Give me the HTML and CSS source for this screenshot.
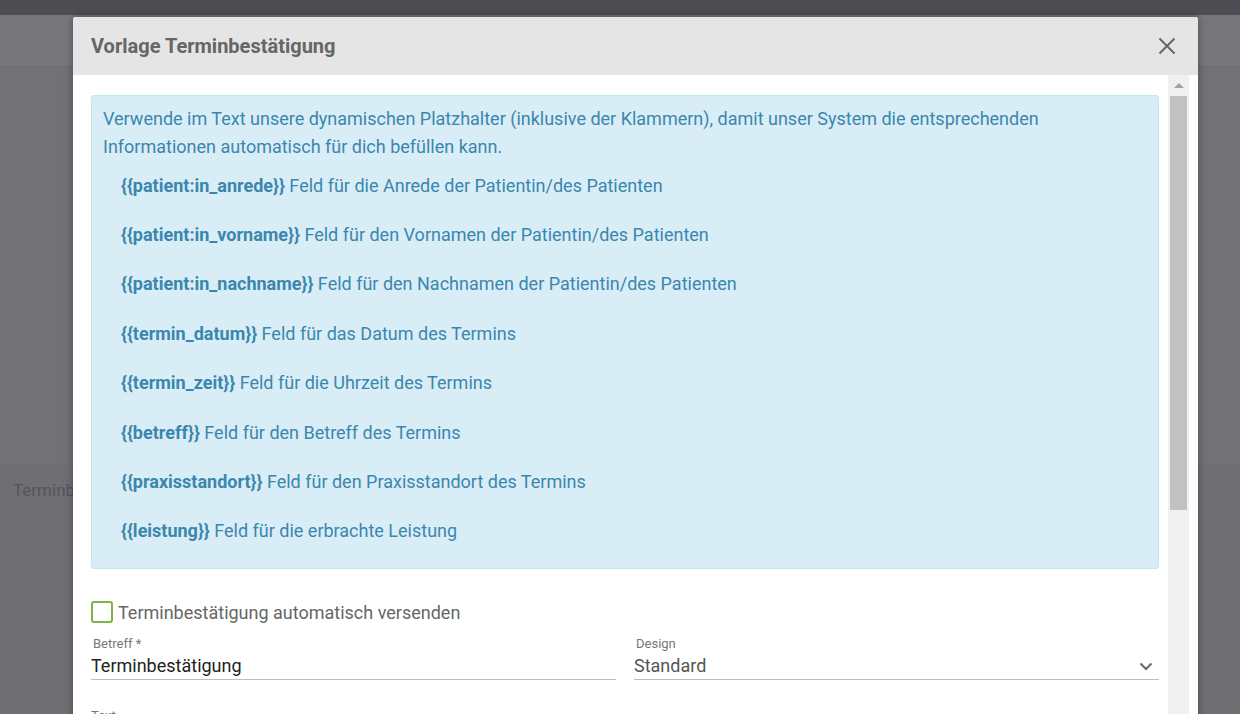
FILE: index.html
```html
<!DOCTYPE html>
<html lang="de">
<head>
<meta charset="utf-8">
<title>Vorlage Terminbestätigung</title>
<link rel="stylesheet" href="styles.css">
</head>
<body>
<div class="page">
  <div class="topbar"></div>
  <div class="subbar"></div>
  <div class="upper"></div>
  <div class="lower">
    <div class="row-title">Terminbestätigung</div>
  </div>
</div>

<div class="modal">
  <div class="modal-header">
    <h1 class="modal-title">Vorlage Terminbestätigung</h1>
    <button class="close" aria-label="Schließen">
      <svg width="18" height="18" viewBox="0 0 18 18"><path d="M1.5 1.5 L16.5 16.5 M16.5 1.5 L1.5 16.5" stroke="#666" stroke-width="2" fill="none"/></svg>
    </button>
  </div>
  <div class="modal-body">
    <div class="scroll-content">
      <div class="info">
        <p class="info-text">Verwende im Text unsere dynamischen Platzhalter (inklusive der Klammern), damit unser System die entsprechenden Informationen automatisch für dich befüllen kann.</p>
        <ul class="placeholders">
          <li><b>{{patient:in_anrede}}</b> Feld für die Anrede der Patientin/des Patienten</li>
          <li><b>{{patient:in_vorname}}</b> Feld für den Vornamen der Patientin/des Patienten</li>
          <li><b>{{patient:in_nachname}}</b> Feld für den Nachnamen der Patientin/des Patienten</li>
          <li><b>{{termin_datum}}</b> Feld für das Datum des Termins</li>
          <li><b>{{termin_zeit}}</b> Feld für die Uhrzeit des Termins</li>
          <li><b>{{betreff}}</b> Feld für den Betreff des Termins</li>
          <li><b>{{praxisstandort}}</b> Feld für den Praxisstandort des Termins</li>
          <li><b>{{leistung}}</b> Feld für die erbrachte Leistung</li>
        </ul>
      </div>
      <label class="check">
        <span class="box"></span>
        <span class="check-label">Terminbestätigung automatisch versenden</span>
      </label>
      <div class="fields">
        <div class="field">
          <div class="field-label">Betreff *</div>
          <div class="field-value">Terminbestätigung</div>
        </div>
        <div class="field">
          <div class="field-label">Design</div>
          <div class="field-value select">Standard
            <svg class="chev" width="14" height="9" viewBox="0 0 14 9"><path d="M1.5 1.5 L7 7 L12.5 1.5" stroke="#666" stroke-width="2" fill="none"/></svg>
          </div>
        </div>
      </div>
      <div class="text-label">Text</div>
    </div>
    <div class="scrollbar">
      <div class="arrow"></div>
      <div class="thumb"></div>
    </div>
  </div>
</div>
</body>
</html>
```

FILE: styles.css
```css
* { box-sizing: border-box; }
html, body { margin: 0; padding: 0; height: 100%; overflow: hidden; }
body {
  font-family: Roboto, "Liberation Sans", sans-serif;
  background: #6f6e73;
}
.page { height: 714px; }
.topbar { height: 15px; background: #4e4d53; }
.subbar { height: 52px; background: #77767b; border-bottom: 1px solid #6c6b70; }
.upper { height: 398px; background: #727176; }
.lower { background: #6f6e73; padding-top: 1px; }
.row-title {
  padding-left: 13px;
  width: 73px;
  overflow: hidden;
  white-space: nowrap;
  font-size: 17px;
  line-height: 48px;
  color: #56555b;
}

.modal {
  position: absolute;
  left: 73px;
  top: 17px;
  width: 1125px;
  height: 720px;
  background: #fff;
  border-radius: 3px 3px 0 0;
  box-shadow: 0 0 8px rgba(0,0,0,0.35);
  display: flex;
  flex-direction: column;
  overflow: hidden;
}
.modal-header {
  height: 58px;
  background: #e5e5e5;
  display: flex;
  align-items: center;
  justify-content: space-between;
  padding: 0 22px 0 18px;
}
.modal-title {
  margin: 0;
  font-size: 20px;
  font-weight: 700;
  color: #666;
}
.close {
  background: none;
  border: 0;
  padding: 0;
  width: 18px;
  height: 18px;
  display: flex;
}
.modal-body {
  flex: 1;
  display: flex;
  padding-right: 9px;
}
.scroll-content {
  flex: 1;
  padding: 20px 9px 0 18px;
}
.info {
  background: #d9edf7;
  border: 1px solid #bce8f1;
  border-radius: 3px;
  color: #3a87ad;
  padding: 9px 12px 12px 11px;
  font-size: 18px;
  line-height: 28px;
}
.info-text { margin: 0; }
.placeholders {
  list-style: none;
  margin: 0;
  padding: 0 0 0 18px;
}
.placeholders li { padding: 10.7px 0; }
.placeholders b { font-weight: 700; }

.check {
  display: flex;
  align-items: center;
  gap: 5px;
  margin-top: 32px;
  height: 22px;
}
.box {
  width: 22px;
  height: 22px;
  border: 2px solid #7cb342;
  border-radius: 3px;
}
.check-label {
  font-size: 18px;
  color: #666;
}
.fields {
  display: grid;
  grid-template-columns: 1fr 1fr;
  gap: 18px;
  margin-top: 12px;
}
.field { border-bottom: 1px solid #bdbdbd; }
.field-label {
  font-size: 13px;
  color: #777;
  padding-left: 2px;
  line-height: 18px;
}
.field-value {
  font-size: 18px;
  color: #222;
  line-height: 26px;
}
.select {
  color: #555;
  display: flex;
  justify-content: space-between;
  align-items: center;
  padding-right: 6px;
}
.text-label {
  margin-top: 28px;
  font-size: 13px;
  color: #777;
}
.scrollbar {
  width: 21px;
  background: #f0f0f0;
  display: flex;
  flex-direction: column;
  align-items: center;
}
.arrow {
  margin-top: 8px;
  width: 0;
  height: 0;
  border-left: 5px solid transparent;
  border-right: 5px solid transparent;
  border-bottom: 5px solid #a3a3a3;
}
.thumb {
  margin-top: 8px;
  width: 17px;
  height: 414px;
  background: #c1c1c1;
}
```
